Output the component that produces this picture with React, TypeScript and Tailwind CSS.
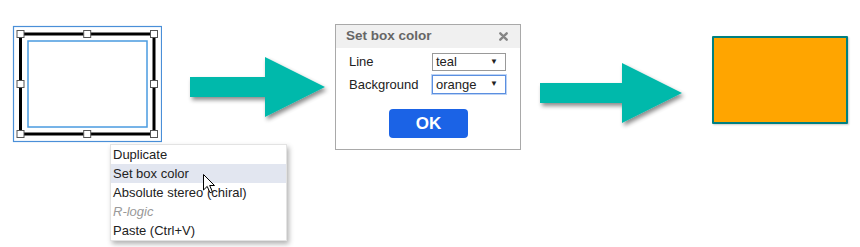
import React from "react";

function Handle({ x, y }: { x: number; y: number }) {
  return <rect x={x - 3.5} y={y - 3.5} width={7} height={7} fill="#fff" stroke="#555" strokeWidth={1} />;
}

function Arrow({ shaftEnd, id }: { shaftEnd: number; id: string }) {
  return (
    <>
      <defs>
        <filter id={id} x="-20%" y="-20%" width="140%" height="150%">
          <feDropShadow dx="2" dy="3" stdDeviation="2" floodColor="#000" floodOpacity="0.45" />
        </filter>
      </defs>
      <path
        d={`M10 27 L${shaftEnd} 27 L${shaftEnd} 7 L${shaftEnd + 60} 37 L${shaftEnd} 67 L${shaftEnd} 47 L10 47 Z`}
        fill="#00b9ab"
        filter={`url(#${id})`}
      />
    </>
  );
}

export default function App() {
  const items = [
    { t: "Duplicate" },
    { t: "Set box color", hl: true },
    { t: "Absolute stereo (chiral)" },
    { t: "R-logic", dis: true },
    { t: "Paste (Ctrl+V)" },
  ];
  return (
    <div className="relative w-[860px] h-[247px] bg-white overflow-hidden font-['Liberation_Sans',Arial,sans-serif] text-[#222]">
      <div className="flex items-start">
        <svg width={150} height={118} className="ml-[12px] mt-[25px] shrink-0">
          <rect x={1.5} y={1.5} width={148} height={115} fill="none" stroke="#4a8fd8" strokeWidth={1.2} />
          <rect x={8.5} y={9} width={133.5} height={100} fill="none" stroke="#000" strokeWidth={3} />
          <rect x={16} y={16} width={119} height={86} fill="none" stroke="#4a9be0" strokeWidth={1.5} />
          <Handle x={8.5} y={9} />
          <Handle x={75.2} y={9} />
          <Handle x={142} y={9} />
          <Handle x={8.5} y={59} />
          <Handle x={142} y={59} />
          <Handle x={8.5} y={109} />
          <Handle x={75.2} y={109} />
          <Handle x={142} y={109} />
        </svg>
        <svg width={155} height={80} className="ml-[18px] mt-[50px] shrink-0">
          <Arrow shaftEnd={85} id="sh1" />
        </svg>
        <div className="mt-[24px] w-[186px] h-[126px] shrink-0 border border-[#a9a9a9] bg-white flex flex-col">
          <div className="h-[23px] bg-[#f0f0f0] flex items-center justify-between pl-[10px] pr-[12px]">
            <span className="text-[13.5px] font-bold text-[#666]">Set box color</span>
            <svg width={9} height={9} viewBox="0 0 9 9">
              <path d="M1.3 1.3 L7.7 7.7 M7.7 1.3 L1.3 7.7" stroke="#858585" strokeWidth={2.4} strokeLinecap="round" />
            </svg>
          </div>
          <div className="grid grid-cols-[83px_74px] gap-y-[3px] pl-[13px] pt-[4px] text-[13px] items-center">
            <span>Line</span>
            <div className="h-[18px] border border-[#999] flex items-center justify-between pl-[3px] pr-[7px]">
              <span>teal</span>
              <span className="text-[8px]">▼</span>
            </div>
            <span>Background</span>
            <div className="h-[19px] border border-[#5b8fe0] shadow-[0_0_0_1px_#bcd3f5] flex items-center justify-between pl-[3px] pr-[7px]">
              <span>orange</span>
              <span className="text-[8px]">▼</span>
            </div>
          </div>
          <div className="flex justify-center mt-[15px] pl-[1px]">
            <div className="w-[79px] h-[29px] rounded-[4px] bg-[#1b63e6] text-white font-bold text-[17px] flex items-center justify-center">
              OK
            </div>
          </div>
        </div>
        <svg width={160} height={80} className="ml-[9px] mt-[55px] shrink-0">
          <g transform="translate(0,1)">
            <Arrow shaftEnd={92} id="sh2" />
          </g>
        </svg>
        <div className="ml-[22px] mt-[36px] w-[136px] h-[88px] shrink-0 bg-[#ffa500] border-2 border-[#008080] rounded-[1px] shadow-[1px_1px_2px_rgba(0,0,0,0.2)]" />
      </div>

      <div className="absolute left-[110px] top-[144px] w-[177px] border border-[#e3e3e3] bg-white shadow-[2px_3px_5px_rgba(0,0,0,0.3)] text-[13px]">
        {items.map((it) => (
          <div
            key={it.t}
            className={
              "h-[19px] flex items-center pl-[2px] " +
              (it.hl ? "bg-[#e2e6f0] " : "") +
              (it.dis ? "italic text-[#999]" : "text-[#222]")
            }
          >
            {it.t}
          </div>
        ))}
      </div>

      <svg width={14} height={21} className="absolute left-[203px] top-[174px]" viewBox="0 0 14 21">
        <path d="M0.5 0.5 L0.5 16 L4.2 12.4 L7 18.8 L9.4 17.8 L6.7 11.5 L11.5 11.5 Z" fill="#fff" stroke="#000" strokeWidth={1} strokeLinejoin="round" />
      </svg>
    </div>
  );
}
